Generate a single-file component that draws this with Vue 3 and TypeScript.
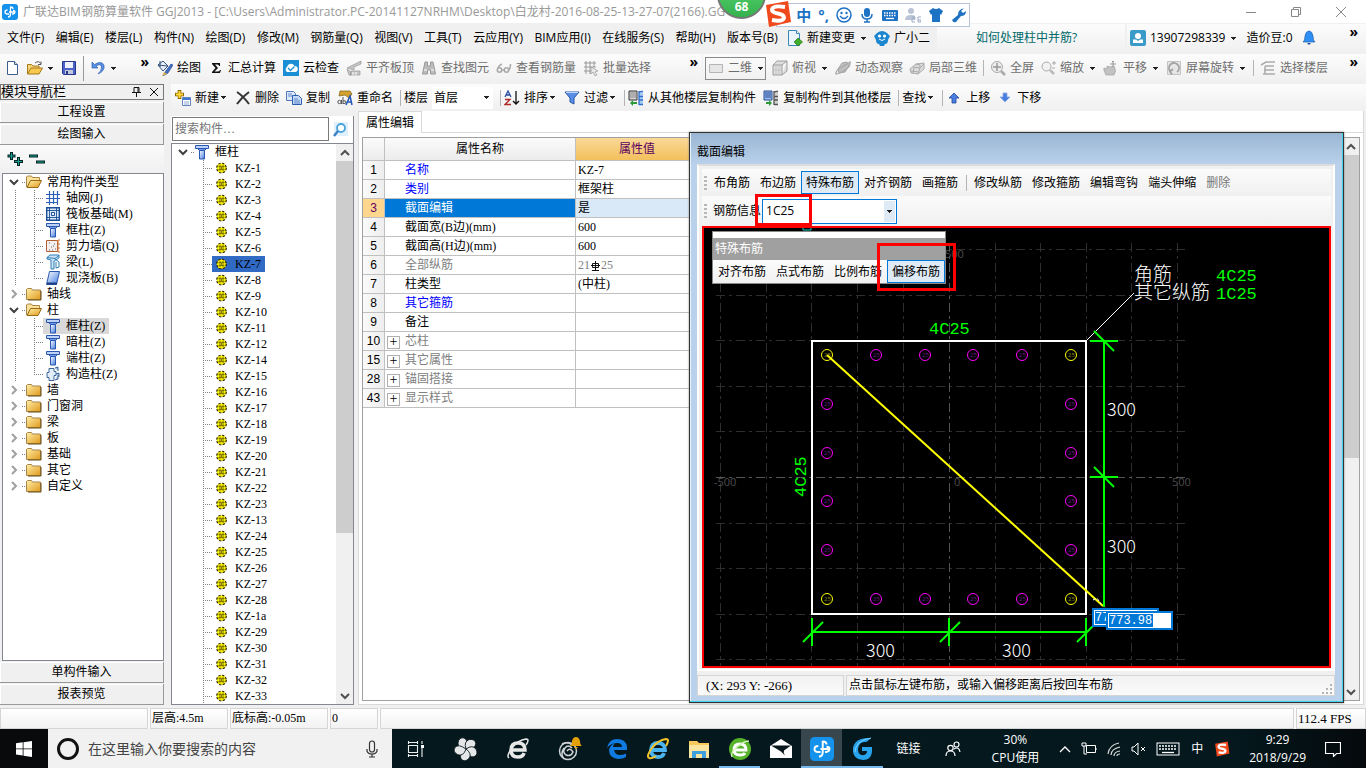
<script setup lang="ts">
import { ref } from 'vue'

interface Tool { icon?: string; text?: string; caret?: boolean; sep?: boolean; dim?: boolean; box?: boolean }
interface NavRow { level: number; text: string; icon: string; open?: boolean; last?: boolean; selected?: boolean }
interface Prop { no: number; name: string; value?: string; tone?: string; group?: boolean }

const menus = ['文件(F)', '编辑(E)', '楼层(L)', '构件(N)', '绘图(D)', '修改(M)', '钢筋量(Q)', '视图(V)', '工具(T)', '云应用(Y)', 'BIM应用(I)', '在线服务(S)', '帮助(H)', '版本号(B)']

const drawTools: Tool[] = [
  { icon: 'paint', text: '绘图' }, { icon: 'sigma', text: '汇总计算' }, { icon: 'cloud', text: '云检查' },
  { icon: 'align', text: '平齐板顶', dim: true }, { icon: 'binoculars', text: '查找图元', dim: true },
  { icon: 'glasses', text: '查看钢筋量', dim: true }, { icon: 'batch', text: '批量选择', dim: true },
]
const viewTools: Tool[] = [
  { icon: 'rect2d', text: '二维', caret: true, dim: true, box: true }, { icon: 'cube', text: '俯视', caret: true, dim: true },
  { icon: 'orbit', text: '动态观察', dim: true }, { icon: 'local3d', text: '局部三维', dim: true }, { sep: true },
  { icon: 'full', text: '全屏', dim: true }, { icon: 'zoom', text: '缩放', caret: true, dim: true },
  { icon: 'pan', text: '平移', caret: true, dim: true }, { icon: 'rotate', text: '屏幕旋转', caret: true, dim: true }, { sep: true },
  { icon: 'floors', text: '选择楼层', dim: true },
]
const editTools: Tool[] = [
  { icon: 'newcomp', text: '新建', caret: true }, { icon: 'delete', text: '删除' }, { icon: 'copy', text: '复制' }, { icon: 'rename', text: '重命名' }, { sep: true },
]
const listTools: Tool[] = [
  { sep: true }, { icon: 'sort', text: '排序', caret: true }, { icon: 'filter', text: '过滤', caret: true }, { sep: true },
  { icon: 'copyfrom', text: '从其他楼层复制构件' }, { icon: 'copyto', text: '复制构件到其他楼层' }, { sep: true },
  { text: '查找', caret: true }, { sep: true }, { icon: 'up', text: '上移' }, { icon: 'down', text: '下移' },
]

const navRows: NavRow[] = [
  { level: 0, text: '常用构件类型', icon: 'folderopen', open: true },
  { level: 1, text: '轴网(J)', icon: 'axis' },
  { level: 1, text: '筏板基础(M)', icon: 'raft' },
  { level: 1, text: '框柱(Z)', icon: 'column' },
  { level: 1, text: '剪力墙(Q)', icon: 'wall' },
  { level: 1, text: '梁(L)', icon: 'beam' },
  { level: 1, text: '现浇板(B)', icon: 'slab', last: true },
  { level: 0, text: '轴线', icon: 'folder' },
  { level: 0, text: '柱', icon: 'folderopen', open: true },
  { level: 1, text: '框柱(Z)', icon: 'column', selected: true },
  { level: 1, text: '暗柱(Z)', icon: 'column' },
  { level: 1, text: '端柱(Z)', icon: 'column' },
  { level: 1, text: '构造柱(Z)', icon: 'tiecol', last: true },
  ...['墙', '门窗洞', '梁', '板', '基础', '其它', '自定义'].map((text) => ({ level: 0, text, icon: 'folder' })),
]

const columns = '1 2 3 4 5 6 7 8 9 10 11 12 14 15 16 17 18 19 20 21 22 23 13 24 25 26 27 28 1a 29 30 31 32 33'.split(' ')
const selectedColumn = ref('7')

const props: Prop[] = [
  { no: 1, name: '名称', value: 'KZ-7', tone: 'blue' },
  { no: 2, name: '类别', value: '框架柱', tone: 'blue' },
  { no: 3, name: '截面编辑', value: '是' },
  { no: 4, name: '截面宽(B边)(mm)', value: '600' },
  { no: 5, name: '截面高(H边)(mm)', value: '600' },
  { no: 6, name: '全部纵筋', value: '21', tone: 'gray' },
  { no: 7, name: '柱类型', value: '(中柱)' },
  { no: 8, name: '其它箍筋', tone: 'blue' },
  { no: 9, name: '备注' },
  { no: 10, name: '芯柱', tone: 'gray', group: true },
  { no: 15, name: '其它属性', tone: 'gray', group: true },
  { no: 28, name: '锚固搭接', tone: 'gray', group: true },
  { no: 43, name: '显示样式', tone: 'gray', group: true },
]
const activeRow = ref(3)

const rebarModes = ['布角筋', '布边筋', '特殊布筋', '对齐钢筋', '画箍筋']
const rebarEdits = ['修改纵筋', '修改箍筋', '编辑弯钩', '端头伸缩']
const specialModes = ['对齐布筋', '点式布筋', '比例布筋', '偏移布筋']
const mode = ref('特殊布筋')
const special = ref('偏移布筋')
const search = ref('')
const offsetA = ref('773.98')
const offsetB = ref('773.98')

// Section drawing: origin at the column centre
const gridX = [-228, -182, -137, -91, -45, 46, 91, 137, 182, 228]
const gridY = [-227, -181, -136, -90, -45, 46, 91, 137, 182]
const steps = [-122, -73, -24, 24, 73, 122]
const bars = steps.flatMap((x) => steps.filter((y) => Math.abs(x) === 122 || Math.abs(y) === 122)
  .map((y) => ({ x, y, corner: Math.abs(x) === 122 && Math.abs(y) === 122 })))

const apps = ['edge', 'ie', 'explorer', 'greene', 'mail', 'glodon', 'gblue']
</script>

<template>
  <svg class="defs" aria-hidden="true">
    <defs>
      <linearGradient id="gBlue" x1="0" y1="0" x2="1" y2="1"><stop offset="0" stop-color="#fff" /><stop offset="1" stop-color="#3f7ae0" /></linearGradient>
      <linearGradient id="gGold" x1="0" y1="0" x2="1" y2="1"><stop offset="0" stop-color="#fff0a8" /><stop offset="1" stop-color="#e09a1c" /></linearGradient>
    </defs>
    <symbol id="logo" viewBox="0 0 16 16"><rect width="16" height="16" rx="3" fill="#1492ec" /><path d="M8.500 2.500V10q0 3-2.500 3M8.500 3Q11 3 11 5M5.500 6Q3 6 3 8t2.500 2H7M7 8h6M11 6.500q2 0 2 1.500t-2 2h-1" fill="none" stroke="#fff" stroke-width="1.300" /></symbol>
    <symbol id="newdoc" viewBox="0 0 16 16"><path d="M2.500 1.500h7l3 3v10h-10z" fill="#fff" stroke="#3a5f8c" /><path d="M9.500 1.500v3h3" fill="#cfe0f4" stroke="#3a5f8c" /></symbol>
    <symbol id="openfile" viewBox="0 0 16 16"><path d="M.5 14V4.500h4L6 6h6v2" fill="#f5d67a" stroke="#a87716" /><path d="M.5 14 4 8h11.500L12 14z" fill="#f8c94f" stroke="#a87716" /><path d="M8 3q4-3 5.500.5m.5-2v3h-3" fill="none" stroke="#555" /></symbol>
    <symbol id="save" viewBox="0 0 16 16"><path d="M1.500 1.500h13v13h-12l-1-1z" fill="#4b63c7" stroke="#29368c" /><path d="M4 2h8v6H4z" fill="#eef1fb" /><path d="M4 10h8v4H4z" fill="#c2c8dc" /><path d="M5 11h2v3H5z" fill="#29368c" /></symbol>
    <symbol id="undo" viewBox="0 0 16 16"><path d="M2 2v6h6L6 6q5-3 5.500 1 0 4-3.500 7 7-3 6-8.500Q12 0 4.500 4.500z" fill="#5a8fe0" stroke="#2c5fb8" stroke-width=".7" /></symbol>
    <symbol id="paint" viewBox="0 0 16 16"><path d="m1 5 5-4 5 5-5 5z" fill="#e8eef8" stroke="#35507a" /><path d="M3 1v6M1 5l9 1" stroke="#35507a" fill="none" /><path d="m8 12 6-8 2 1-5 8-5 3z" fill="#3f71c8" stroke="#24407c" stroke-width=".6" /><path d="m5 16 2-4 3 2z" fill="#e3b44a" /></symbol>
    <symbol id="sigma" viewBox="0 0 16 16"><path d="M4 3h8v3h-1q0-1.500-1.500-1.500H7L10 8l-3.500 3.500h3Q11.500 11.500 12 10h1l-1 3H4v-1l3.500-4L4 4z" fill="#111" /></symbol>
    <symbol id="cloud" viewBox="0 0 16 16"><rect width="16" height="16" fill="#1b8fd6" /><path d="M4 12a3 3 0 0 1 0-5 4 4 0 0 1 7.500-1A3 3 0 0 1 12 12z" fill="#fff" /><path d="m5 8 2.500 2.500 4-4" stroke="#1b8fd6" fill="none" stroke-width="1.300" /></symbol>
    <symbol id="align" viewBox="0 0 16 16"><path d="m1 8 6-3 8-4v3L8 7v3zM5 11h9v4H4zM1 9l4 3v3H3z" fill="#c4c4c4" stroke="#999" stroke-width=".7" /><path d="M7 12v3m3-3v3" stroke="#fff" /></symbol>
    <symbol id="binoculars" viewBox="0 0 16 16"><path d="M4 2h2.500v4h3V2H12l2.500 12h-5v-4h-3v4h-5z" fill="#bdbdbd" stroke="#999" /><path d="M3 10h3m4 0h3" stroke="#fff" /></symbol>
    <symbol id="glasses" viewBox="0 0 16 16"><g fill="none" stroke="#aaa" stroke-width="1.600"><circle cx="3.500" cy="10" r="2.200" /><circle cx="10.500" cy="10" r="2.200" /><path d="M6 10h2M2 8q1-3 4-4M12.500 10q2-1 2-6" /></g></symbol>
    <symbol id="batch" viewBox="0 0 16 16"><path d="M1 3h12M1 7h12M1 11h8M3 1v13M7 1v13M11 1v6" stroke="#999" fill="none" /><path d="m8 7 7 4-3 1 2 3-2 1-2-4-2 2z" fill="#e8e8e8" stroke="#999" stroke-width=".7" /></symbol>
    <symbol id="rect2d" viewBox="0 0 16 16"><path d="M1.500 4.500h13v8h-13z" fill="#e6e6e6" stroke="#b5b5b5" /></symbol>
    <symbol id="cube" viewBox="0 0 16 16"><path d="M1 5h9v10H1zM1 5l4-4h10l-5 4M15 1v10l-5 4" fill="#dedede" stroke="#9d9d9d" /><path d="M4 6v8m3-8v8M2 10h7" stroke="#c4c4c4" /></symbol>
    <symbol id="orbit" viewBox="0 0 16 16"><path d="m3 9 4-6 5-1 2 4-4 6-6 1z" fill="#bfbfbf" stroke="#a5a5a5" /><path d="M1 14Q0 11 7 7t8-5q1 4-5 8t-9 4z" fill="none" stroke="#aaa" stroke-width="1.300" /></symbol>
    <symbol id="local3d" viewBox="0 0 16 16"><path d="m1 9 6-5 8-1v6l-6 5-7-1z" fill="#ddd" stroke="#aaa" /><path d="m4 7 7 1 4-4M11 8l-2 6M7 4l4 1v3M5 8l-1 5M2 11l8 1" fill="none" stroke="#aaa" /></symbol>
    <symbol id="full" viewBox="0 0 16 16"><circle cx="7" cy="7" r="5.500" fill="#eee" stroke="#aaa" /><path d="M7 3v8M3 7h8" stroke="#999" stroke-width="1.500" /><path d="m11 11 4 4" stroke="#aaa" stroke-width="2.500" /></symbol>
    <symbol id="zoom" viewBox="0 0 16 16"><circle cx="6.500" cy="6.500" r="4.500" fill="#f2f2f2" stroke="#aaa" /><path d="m10 10 4 4" stroke="#bbb" stroke-width="2.500" /><path d="M12 3h4m-2-2v4M12 8h3" stroke="#aaa" /></symbol>
    <symbol id="pan" viewBox="0 0 16 16"><path d="M3 15q-3-6-2-7l3 1V6l3 1 4-1q3 5 0 9z" fill="#c2c2c2" stroke="#a0a0a0" stroke-width=".7" /><path d="M10 1v6M7 4h6M9 2l1-1 1 1" stroke="#999" fill="none" /></symbol>
    <symbol id="rotate" viewBox="0 0 16 16"><path d="M1.500 1.500h13v13h-13z" fill="#e6e6e6" stroke="#c4c4c4" /><path d="M4 11a5 5 0 1 1 7 1M7 9l-3 2.500 2 3" fill="none" stroke="#a0a0a0" stroke-width="1.800" /></symbol>
    <symbol id="floors" viewBox="0 0 16 16"><path d="m1 5 5-3 9 0M5 6h9M4 10h10M3 14h12M5 6v8" stroke="#aaa" stroke-width="1.500" fill="none" /></symbol>
    <symbol id="newcomp" viewBox="0 0 16 16"><path d="M4.500 0v9M0 4.500h9" stroke="#8b6a00" stroke-width="3.600" /><path d="M4.500 1v7M1 4.500h7" stroke="#ffd83c" stroke-width="2" /><path d="M7.500 7.500h8v8h-8z" fill="#fff" stroke="#5e83bd" /><path d="M8 8h7v2H8z" fill="#3f78d0" /><path d="M9 12h5m-5 2h5" stroke="#8aa9d6" /></symbol>
    <symbol id="delete" viewBox="0 0 16 16"><path d="M2 2q6 4 12 12M14 2Q7 7 2 14" stroke="#333" stroke-width="2" fill="none" /></symbol>
    <symbol id="copy" viewBox="0 0 16 16"><path d="M.5 1.500h7l2 2v7h-9z" fill="#dfeafb" stroke="#5078b8" /><path d="M6.500 5.500h6l3 3v6h-9z" fill="#c5daf8" stroke="#2e5fae" /><path d="M2 4h4M2 6h4m2 3h4m-4 2h6m-6 2h6" stroke="#3f6fbe" stroke-width=".8" /></symbol>
    <symbol id="rename" viewBox="0 0 16 16"><path d="M3 1h10l2 3-3 4-4-3-6 1z" fill="#d5a22e" stroke="#7d5b10" stroke-width=".7" /><g fill="none" stroke="#555"><circle cx="2.500" cy="12" r="1.700" /><path d="M4.500 10v4M6 7v7m0-3q3-1 3 1t-3 1.500" /></g><path d="m9 15 4-9 2 9m-5-3h4" stroke="#2457b8" stroke-width="1.500" fill="none" /></symbol>
    <symbol id="sort" viewBox="0 0 16 16"><path d="m1 7 3-6 3 6M2 5h4" stroke="#2a4ea0" fill="none" stroke-width="1.300" /><path d="M1 9.500h5l-5 5h6" stroke="#b02a2a" fill="none" stroke-width="1.300" /><path d="M12 1v13m-3-3 3 3 3-3" stroke="#111" fill="none" stroke-width="1.300" /></symbol>
    <symbol id="filter" viewBox="0 0 16 16"><path d="M1 2h14l-5 6v6l-4-2V8z" fill="#5a8ee6" stroke="#2857a8" /><path d="M2 2.500h12" stroke="#bcd4f8" /></symbol>
    <symbol id="copyfrom" viewBox="0 0 16 16"><path d="M1 1h8v9H1z" fill="#d4d4d4" stroke="#333" /><path d="M2 3h6M2 5h6M2 7h6" stroke="#888" /><path d="M11 1h4v14h-4z" fill="#a9ccf4" /><path d="M11 1v14M11 2.500q2-1.500 4-1M11 6.500h4M11 10h4M11 14.500h4" stroke="#2f6fc8" fill="none" stroke-width="1.300" /><path d="m2 13 3-3v2h4v2H5v2z" fill="#2d9a38" /></symbol>
    <symbol id="copyto" viewBox="0 0 16 16"><path d="M1 1h8v9H1z" fill="#9dbcf0" stroke="#234a94" /><path d="M2 3h6M2 5h6M2 7h6" stroke="#234a94" /><path d="M11 1h4v14h-4z" fill="#d0d0d0" /><path d="M11 1v14M11 2.500q2-1.500 4-1M11 6.500h4M11 10h4M11 14.500h4" stroke="#555" fill="none" stroke-width="1.300" /><path d="m9 13-3-3v2H3v2h3v2z" fill="#2d9a38" /></symbol>
    <symbol id="up" viewBox="0 0 16 16"><path d="m8 3 5 5h-3v5H6V8H3z" fill="#4a7fe0" stroke="#1f459c" stroke-width=".8" /></symbol>
    <symbol id="down" viewBox="0 0 16 16"><path d="m8 12 5-5h-3V3H6v4H3z" fill="#4a7fe0" stroke="#8aa9e6" stroke-width=".8" /></symbol>
    <symbol id="change" viewBox="0 0 16 16"><path d="M1.500.5h8l3 3v12h-11z" fill="#eaf5fd" stroke="#3a87b8" /><path d="M9.500.5v3h3" fill="#fff" stroke="#3a87b8" /><path d="m11 8 4.500 4-4.500 4-4-4z" fill="#3fae2a" stroke="#25760f" stroke-width=".7" /></symbol>
    <symbol id="robot" viewBox="0 0 16 16"><path d="M3 3q5-4 10 0l3 3-2 4q0 4-3 4l-1 2H6l-1-2q-3 0-3-4L0 6z" fill="#1c86cf" /><circle cx="5.500" cy="6" r="1.600" fill="#fff" /><circle cx="10.500" cy="6" r="1.600" fill="#fff" /><path d="M5 9q3 3 6 0" stroke="#fff" fill="none" /></symbol>
    <symbol id="user" viewBox="0 0 16 16"><rect width="16" height="16" rx="2" fill="#3a9bc8" /><circle cx="8" cy="6" r="3" fill="#fff" /><path d="M3 13V9.500h3l2 1.500 2-1.500h3V13z" fill="#fff" /></symbol>
    <symbol id="bell" viewBox="0 0 16 16"><path d="M2 12q2-1 2-6 1-5 4-5t4 5q0 5 2 6z" fill="#2f8ff5" stroke="#1d5fae" stroke-width=".7" /><path d="M6 13h4l-2 2z" fill="#1d4f9e" /></symbol>
    <symbol id="folder" viewBox="0 0 16 16"><path d="M.5 13.500v-10l1-1h4l1 1.500h8v9.500z" fill="url(#gGold)" stroke="#a8854a" /><path d="M15 5v9H2" fill="none" stroke="#6b4b12" /></symbol>
    <symbol id="folderopen" viewBox="0 0 16 16"><path d="M.5 13V3l1-1h4l1 1.500h7V7" fill="#fbe29a" stroke="#a8854a" /><path d="M1 13.500 4.500 6.500h11l-3.500 7z" fill="url(#gGold)" stroke="#9a6b16" /></symbol>
    <symbol id="axis" viewBox="0 0 14 16"><path d="M0 4.500h14M0 8.500h14M0 12.500h12M3.500 1v14M7.500 1v13M11.500 1v14" stroke="#2d5fb5" stroke-width="1.200" /></symbol>
    <symbol id="raft" viewBox="0 0 14 16"><path d="M.7 1.700h12.600v12.600H.7z" fill="#dceaf8" stroke="#184f96" stroke-width="1.400" /><path d="M3.500 1.500v13M10.500 1.500v13M.5 4.500h13M.5 11.500h13" stroke="#184f96" stroke-width=".9" /><path d="M5.500 6.500h3v3h-3z" fill="#fff" stroke="#184f96" /></symbol>
    <symbol id="column" viewBox="0 0 14 16"><path d="M.5 1.500h13v3h-13z" fill="#bcd2fa" stroke="#2a57b0" /><path d="M2.500 4.500h9l-2 2h-5z" fill="#6d9bee" stroke="#2a57b0" /><path d="M4.500 6.500h5v8.500h-5z" fill="url(#gBlue)" stroke="#2a57b0" /></symbol>
    <symbol id="wall" viewBox="0 0 14 16"><path d="M.5 2.500h11v11H.5z" fill="#f2efec" stroke="#b06030" /><path d="M12 2h2m-2 4h2m-2 4h2m-2 4h2M12 2v12" stroke="#d07030" /><path d="M3 5h1m4 1h1M5 9h1m3 2h1M3 12h1m3-4h1M6 12h1" stroke="#666" /></symbol>
    <symbol id="beam" viewBox="0 0 14 16"><path d="M1 3.500 4 1h9v3L8 7v8H5V6L1 5z" fill="#cfe3f8" stroke="#2e7fb8" /><path d="m1 3.500 8 1 4-3M9 5l4 3v5l-3 1V8" fill="none" stroke="#2e7fb8" /></symbol>
    <symbol id="slab" viewBox="0 0 14 16"><path d="M3.500 1.500h10l-3 13H.5z" fill="url(#gBlue)" stroke="#2a57b0" /><path d="M1 13.500h10" stroke="#1e3f84" stroke-width="2" /></symbol>
    <symbol id="tiecol" viewBox="0 0 14 16"><path d="M3 2.500h5v3h2v4H8v5H3v-3H1v-5h2z" fill="#e4eefa" stroke="#3c6698" /><path d="m9 2 3-1v4m-2 3 3-1v4m-4 3 3-1V9" stroke="#3c6698" fill="#9dbde4" /></symbol>
    <symbol id="gear" viewBox="0 0 11 12"><circle cx="5.500" cy="6" r="4.800" fill="#f5ec00" stroke="#2b2800" stroke-width="1.200" stroke-dasharray="2.300 1.470" /><path d="M4 3v6M7 3v6M2.500 4.500h6M2.500 7.500h6" stroke="#6b6500" stroke-width=".8" /><path d="M5 5.500h1v1H5z" fill="#111" /></symbol>
    <symbol id="search" viewBox="0 0 16 16"><rect x="2" width="14" height="14" fill="#e1f1fb" /><circle cx="9" cy="6" r="4" fill="#fff" stroke="#4aa3dc" stroke-width="1.800" /><path d="m6 9-4 5" stroke="#3b7fc4" stroke-width="2.400" /></symbol>
    <symbol id="sogou" viewBox="0 0 28 28"><path d="m2 5 22-4 3 21-22 5z" fill="#f04a1c" /><path d="M21 7Q9 5 8 9.500q0 3 6 4t6 4.500q-1 4-12 2" fill="none" stroke="#fff" stroke-width="4" /></symbol>
    <symbol id="smile" viewBox="0 0 16 16"><circle cx="8" cy="8" r="7" fill="none" stroke="#1d72c4" stroke-width="1.500" /><circle cx="5.500" cy="6" r="1.200" fill="#1d72c4" /><circle cx="10.500" cy="6" r="1.200" fill="#1d72c4" /><path d="M4 9q4 5 8 0" fill="none" stroke="#1d72c4" stroke-width="1.300" /></symbol>
    <symbol id="micblue" viewBox="0 0 16 16"><rect x="5" y="1" width="6" height="9" rx="3" fill="#1d72c4" /><path d="M3 7q0 5 5 5t5-5M8 12v3m-3 0h6" fill="none" stroke="#1d72c4" stroke-width="1.500" /></symbol>
    <symbol id="kbdblue" viewBox="0 0 16 16"><rect y="3" width="16" height="11" rx="1" fill="#1d72c4" /><path d="M2 6h12M2 8.500h12" stroke="#fff" stroke-width="1.400" stroke-dasharray="1.500 1" /><path d="M4 11.500h8" stroke="#fff" stroke-width="1.300" /></symbol>
    <symbol id="person" viewBox="0 0 16 16"><circle cx="6" cy="4" r="3" fill="#b9c4d6" /><path d="M0 13q0-5 6-5 3 0 4 1v4z" fill="#b9c4d6" /><path d="M7 10h3v2H7v3h3m6-5h-3v5h3v-2h-3" fill="none" stroke="#9facc4" /></symbol>
    <symbol id="shirt" viewBox="0 0 16 16"><path d="m1 4 4-3q3 2 6 0l4 3-2 4-1-1v8H4V7L3 8z" fill="#1d72c4" /></symbol>
    <symbol id="wrench" viewBox="0 0 16 16"><path d="M15 4q0 5-5 5l-5 6q-3 1-4-2l6-5q0-6 6-6.500L10 4l2 2z" fill="#1d72c4" /></symbol>
    <symbol id="win" viewBox="0 0 16 16"><path d="M0 2.300 6.700 1.300v6.200H0zM7.500 1.200 16 0v7.500H7.500zM0 8.300h6.700v6.200L0 13.600zM7.500 8.300H16V16l-8.500-1.200z" fill="#fff" /></symbol>
    <symbol id="mic" viewBox="0 0 16 18"><g fill="none" stroke="#333" stroke-width="1.200"><rect x="5.500" y="1" width="5" height="11" rx="2.500" /><path d="M3 9v2q1 3 5 3t5-3V9M8 14v3m-3 0h6" /></g></symbol>
    <symbol id="taskview" viewBox="0 0 18 16"><path d="M1 1.500h10M1 14.500h10M1.500 4.500h9v7h-9zM1.500 0v3M10.500 0v3M1.500 13v3M10.500 13v3M15 0v3M15 6v10" stroke="#eee" fill="none" stroke-width="1.100" /><path d="M14 4h3v3h-3z" fill="#fff" /></symbol>
    <symbol id="petal" viewBox="0 0 24 24"><path d="M12 12Q4 12 4 6 5 0 10 1q5 2 2 11z" fill="#e4e6e8" stroke="#0a181c" stroke-width=".8" /></symbol>
    <symbol id="pinwheel" viewBox="0 0 24 24"><use v-for="a in [0, 72, 144, 216, 288]" :key="a" href="#petal" width="24" height="24" :transform="`rotate(${a} 12 12)`" /></symbol>
    <symbol id="ewhite" viewBox="0 0 24 24"><path d="M5 13h14q0-7-7-7t-7 7q0 7 7 7 5 0 6-4" fill="none" stroke="#e8e8e8" stroke-width="3.500" /><path d="M3 21q-3-2 3-10T20 2q4 0 0 6" fill="none" stroke="#e8e8e8" stroke-width="1.500" /></symbol>
    <symbol id="swirl" viewBox="0 0 24 24"><g fill="none" stroke="#cfd3d6" stroke-width="1.500"><circle cx="10" cy="14" r="8.500" /><path d="M14 11q-4-4-7 0t1 7q5 2 7-3-3-5-6-1M4 7q6-3 10 1M6 22q-4-5 0-11" /></g><path d="M12 9q2-1 2-5 1-4 4-4t4 4q0 4 2 5zM16 10h4q-2 3-4 0z" fill="#e3a008" /></symbol>
    <symbol id="edge" viewBox="0 0 24 24"><path d="M2 11Q4 2 12 2q9 0 10 8v3H9q1 5 6 5 3 0 6-1.500V20q-3 2-8 2-9-1-9-9 1-5 6-7-2 2-2 4h9q0-4-5-4-6 0-10 5z" fill="#0f7be0" /></symbol>
    <symbol id="ie" viewBox="0 0 24 24"><path d="M5 13h14q0-7-7-7t-7 7q0 7 7 7 5 0 6-4" fill="none" stroke="#4bb4f0" stroke-width="3.800" /><path d="M3 21q-3-2 3-10T20 2q4 0 0 7M3 21q3 1 7-2" fill="none" stroke="#f3c52c" stroke-width="2" /></symbol>
    <symbol id="explorer" viewBox="0 0 24 24"><path d="M2 4h8l2 2h10v15H2z" fill="#f5c95c" /><path d="M2 8h20v13H2z" fill="#fbe3a0" /><path d="M5 21v-7h14v7h-4v-4H9v4z" fill="#3f9fdc" /></symbol>
    <symbol id="greene" viewBox="0 0 24 24"><circle cx="12" cy="12" r="11" fill="#57b32a" /><path d="M6 13h12q0-6-6-6t-6 6q0 5 6 5 4 0 5-2" fill="none" stroke="#fff" stroke-width="2.800" /><path d="M4 20Q2 16 9 10t12-6" fill="none" stroke="#d8f5c0" stroke-width="1.400" /></symbol>
    <symbol id="mail" viewBox="0 0 24 24"><path d="m1 9 11-7 11 7v12H1z" fill="#fff" /><path d="M2 8.500h20l-7 5q-1 3 1 5l-4-4z" fill="#07171b" /></symbol>
    <symbol id="gblue" viewBox="0 0 24 24"><path d="M20 1q-4 4-5 4Q8 4 7 12q0 7 6 6 3-1 3-4h-5v-4h10q1 13-9 13Q1 22 2 11 4 0 20 1z" fill="#28a3ee" /><path d="M20 1q-8 1-12 5t-4 9" stroke="#7fd0ff" fill="none" /></symbol>
    <symbol id="people" viewBox="0 0 16 16"><g fill="none" stroke="#fff" stroke-width="1.200"><circle cx="5.500" cy="7" r="2.700" /><circle cx="11.500" cy="3.500" r="2.500" /><path d="M1 15q0-5 4.500-5t4.500 5M9 8q5-3 6 3" /></g></symbol>
    <symbol id="battery" viewBox="0 0 16 16"><path d="M5.500 4.500h9v7h-9zM15 7v2M1 2v3h4V2M2 1v2m2-2v2M3 5v8h3" fill="none" stroke="#fff" /></symbol>
    <symbol id="wifi" viewBox="0 0 16 16"><path d="M2 13Q3 4 13 2M5 14q0-6 9-8M8 15q0-4 6-5M11 15q0-2 3-2" fill="none" stroke="#ddd" stroke-width="1.200" /></symbol>
    <symbol id="mute" viewBox="0 0 16 16"><path d="M1 6h2l4-4v12L3 10H1zM10 6l4 4m0-4-4 4" fill="none" stroke="#fff" /></symbol>
    <symbol id="keyboard" viewBox="0 0 24 16"><rect x="1" y="2" width="22" height="12" fill="none" stroke="#fff" /><path d="M3 5h18M3 8h18" stroke="#fff" stroke-dasharray="2 1" stroke-width="1.300" /><path d="M6 11.500h12" stroke="#fff" stroke-width="1.300" /></symbol>
    <symbol id="notice" viewBox="0 0 16 16"><path d="M.5 1.500h15v11h-4l-3 3v-3h-8z" fill="none" stroke="#fff" stroke-width="1.200" /></symbol>
    <symbol id="rebar" viewBox="0 0 9 10"><path d="M4.500 0v10M1 9.500h7" stroke="#111" /><path d="M1.500 2.500h6v4h-6z" fill="none" stroke="#111" /><path d="M0 4.500h9" stroke="#111" /></symbol>
  </svg>

  <div class="app">
    <header class="title">
      <svg class="i16"><use href="#logo" /></svg>
      <h1>广联达BIM钢筋算量软件 GGJ2013 - [C:\Users\Administrator.PC-20141127NRHM\Desktop\白龙村-2016-08-25-13-27-07(2166).GG</h1>
      <div class="winbtns">
        <button aria-label="最小化"><svg viewBox="0 0 12 12"><path d="M1 6.500h10" /></svg></button>
        <button aria-label="还原"><svg viewBox="0 0 12 12"><path d="M1.500 3.500h7v7h-7zM3.500 3.500v-2h7v7h-2" /></svg></button>
        <button aria-label="关闭"><svg viewBox="0 0 12 12"><path d="m1 1 10 10M11 1 1 11" /></svg></button>
      </div>
      <div class="ball">68</div>
      <div class="ime">
        <svg class="sogou"><use href="#sogou" /></svg>
        <b>中</b><b>°,</b>
        <svg v-for="n in ['smile', 'micblue', 'kbdblue', 'person', 'shirt', 'wrench']" :key="n" class="i16"><use :href="'#' + n" /></svg>
      </div>
    </header>

    <div class="row">
      <nav class="strip menus">
        <button v-for="m in menus" :key="m">{{ m }}</button>
      </nav>
      <div class="strip extras">
        <button class="tool"><svg class="i16"><use href="#change" /></svg>新建变更<i class="caret"></i></button>
        <button class="tool"><svg class="i16"><use href="#robot" /></svg>广小二</button>
      </div>
      <div class="strip tip"><a href="#">如何处理柱中并筋?</a></div>
      <div class="strip account">
        <button class="tool"><svg class="i16"><use href="#user" /></svg>13907298339<i class="caret"></i></button>
        <span>造价豆:0</span>
        <svg class="i16"><use href="#bell" /></svg>
        <button class="more">»</button>
      </div>
    </div>

    <div class="row">
      <div class="strip files">
        <button aria-label="新建文件"><svg class="i16"><use href="#newdoc" /></svg></button>
        <button class="tool" aria-label="打开"><svg class="i16"><use href="#openfile" /></svg><i class="caret"></i></button>
        <button aria-label="保存"><svg class="i16"><use href="#save" /></svg></button>
        <i class="sep dark"></i>
        <button class="tool" aria-label="撤销"><svg class="i16"><use href="#undo" /></svg><i class="caret"></i></button>
        <button class="more">»</button>
      </div>
      <div class="strip draw">
        <button v-for="t in drawTools" :key="t.text" class="tool" :class="{ dim: t.dim }"><svg class="i16"><use :href="'#' + t.icon" /></svg>{{ t.text }}</button>
        <button class="more">»</button>
      </div>
      <div class="strip views">
        <template v-for="(t, k) in viewTools" :key="k">
          <i v-if="t.sep" class="sep"></i>
          <button v-else class="tool dim" :class="{ box: t.box }"><svg class="i16"><use :href="'#' + t.icon" /></svg>{{ t.text }}<i v-if="t.caret" class="caret"></i></button>
        </template>
        <button class="more">»</button>
      </div>
    </div>

    <main class="body">
      <aside class="nav">
        <div class="navhead"><span>模块导航栏</span>
          <button aria-label="固定"><svg viewBox="0 0 12 12"><path d="M4 1.500h5v5H4zM2 6.500h9M6.500 7v4M8 2v4" /></svg></button>
          <button aria-label="关闭"><svg viewBox="0 0 12 12"><path d="m2 2 8 8m0-8-8 8" /></svg></button>
        </div>
        <button class="bar">工程设置</button>
        <button class="bar">绘图输入</button>
        <div class="expand">
          <button aria-label="全部展开"><svg viewBox="0 0 16 16"><path d="M4.500 1v8M.5 5h8M11.500 6v9M7 10.500h9" stroke="#022" stroke-width="3" /><path d="M4.500 2v6M1.500 5h6M11.500 7v7M8 10.500h7" stroke="#1aa090" /></svg></button>
          <button aria-label="全部折叠"><svg viewBox="0 0 16 16"><path d="M0 5h9M7 11h9" stroke="#022" stroke-width="3" /><path d="M1 5h7M8 11h7" stroke="#1aa090" /></svg></button>
        </div>
        <ul class="navtree">
          <li v-for="(r, k) in navRows" :key="k">
            <template v-if="r.level === 0">
              <svg class="chev" :class="{ open: r.open }" viewBox="0 0 12 12"><path :d="r.open ? 'M2 4l4 4 4-4' : 'M4 2l4 4-4 4'" /></svg>
              <i class="hdots"></i><svg class="i16"><use :href="'#' + r.icon" /></svg><span class="t0">{{ r.text }}</span>
            </template>
            <template v-else>
              <i class="ga"></i><i class="gb" :class="{ last: r.last }"></i>
              <span class="leaf" :class="{ selected: r.selected }"><svg class="i14"><use :href="'#' + r.icon" /></svg>{{ r.text }}</span>
            </template>
          </li>
        </ul>
        <button class="bar">单构件输入</button>
        <button class="bar">报表预览</button>
      </aside>

      <section class="right">
        <div class="strip edit">
          <template v-for="(t, k) in editTools" :key="k">
            <i v-if="t.sep" class="sep"></i>
            <button v-else class="tool"><svg class="i16"><use :href="'#' + t.icon" /></svg>{{ t.text }}<i v-if="t.caret" class="caret"></i></button>
          </template>
          <label class="floor">楼层 <select><option>首层</option></select><i class="caret"></i></label>
          <template v-for="(t, k) in listTools" :key="'l' + k">
            <i v-if="t.sep" class="sep"></i>
            <button v-else class="tool"><svg v-if="t.icon" class="i16"><use :href="'#' + t.icon" /></svg>{{ t.text }}<i v-if="t.caret" class="caret"></i></button>
          </template>
        </div>
        <div class="panes">
          <div class="list">
            <div class="find"><input v-model="search" aria-label="搜索构件" placeholder="搜索构件…"><button aria-label="搜索"><svg class="i16"><use href="#search" /></svg></button></div>
            <div class="listbox">
              <ul>
                <li class="root"><svg class="chev open" viewBox="0 0 12 12"><path d="M2 4l4 4 4-4" /></svg><i class="hdots"></i><svg class="i14"><use href="#column" /></svg><span class="t0">框柱</span></li>
                <li v-for="c in columns" :key="c"><i class="gb"></i><span class="kz" :class="{ on: c === selectedColumn }" @click="selectedColumn = c"><svg><use href="#gear" /></svg>KZ-{{ c }}</span></li>
              </ul>
              <div class="scroll"><svg viewBox="0 0 12 12"><path d="m2 8 4-4 4 4" /></svg><i class="thumb"></i><svg viewBox="0 0 12 12"><path d="m2 4 4 4 4-4" /></svg></div>
            </div>
          </div>

          <div class="props">
            <div class="tabs"><button class="tab">属性编辑</button><i></i></div>
            <div class="propbox">
              <table>
                <colgroup><col class="cno"><col class="cname"><col></colgroup>
                <thead><tr><th></th><th>属性名称</th><th class="val"><span>属性值</span></th></tr></thead>
                <tbody>
                  <tr v-for="p in props" :key="p.no" :class="{ active: p.no === activeRow }" @click="activeRow = p.no">
                    <th>{{ p.no }}</th>
                    <td :class="p.tone"><i class="plus" :class="{ none: !p.group }">+</i>{{ p.name }}</td>
                    <td :class="{ gray: p.no === 6 }">{{ p.value }}<template v-if="p.no === 6"> <svg class="rebar"><use href="#rebar" /></svg>25</template></td>
                  </tr>
                </tbody>
              </table>
              <div class="scroll"><svg viewBox="0 0 12 12"><path d="m2 8 4-4 4 4" /></svg><i class="thumb"></i><svg viewBox="0 0 12 12"><path d="m2 4 4 4 4-4" /></svg></div>
            </div>

            <div class="dialog" role="dialog" aria-labelledby="dlg">
              <h2 id="dlg">截面编辑</h2>
              <div class="dbody">
                <div class="dtools">
                  <i class="grip"></i>
                  <button v-for="m in rebarModes" :key="m" :class="{ on: m === mode }" @click="mode = m">{{ m }}</button>
                  <i class="sep"></i>
                  <button v-for="m in rebarEdits" :key="m">{{ m }}</button>
                  <button disabled>删除</button>
                </div>
                <div class="dtools second">
                  <i class="grip"></i><label for="info">钢筋信息</label>
                  <span class="combo"><select id="info"><option>1C25</option></select><i class="drop"><i class="caret"></i></i></span>
                </div>
                <div class="canvas">
                  <svg class="drawing">
                    <path d="M99 0v2h8V0" stroke="#19d0d0" fill="none" />
                    <g transform="translate(245 249)">
                      <g class="grid">
                        <path v-for="x in gridX" :key="'x' + x" :d="`M${x}.5-234v423`" />
                        <path v-for="y in gridY" :key="'y' + y" :d="`M-233 ${y}.5h469`" />
                        <path class="axis" d="M.5-234v423M-233 .5h469" />
                      </g>
                      <g class="gl"><text x="-235" y="9">-500</text><text x="5" y="9">0</text><text x="223" y="9">500</text><text x="-4" y="-219">500</text></g>
                      <rect x="-137" y="-136" width="274" height="273" fill="none" stroke="#fff" stroke-width="2" />
                      <path d="M137-136 185-184" stroke="#fff" />
                      <g v-for="b in bars" :key="b.x + ',' + b.y" :class="b.corner ? 'corner' : 'mid'">
                        <circle :cx="b.x" :cy="b.y" r="5.500" /><text :x="b.x - 3" :y="b.y + 2">25</text>
                      </g>
                      <path d="M-122-122 154 129" stroke="#ff0" stroke-width="2" />
                      <path d="m144 123 4-2 4 6" fill="none" stroke="#fff" stroke-dasharray="3 2" />
                      <path class="measure" d="M155-136v266M141-136h28M145-146l20 20M141 0h28M145-10l20 20M-137 155h274M-137 141v28M0 141v28M137 141v28M-146 165l20-20M-9 165l20-20M128 165l20-20" />
                      <g class="white"><text x="158" y="-61">300</text><text x="158" y="76">300</text><text x="-83" y="180">300</text><text x="53" y="180">300</text></g>
                      <g class="cjk"><text x="185" y="-196">角筋</text><text x="185" y="-178">其它纵筋</text></g>
                      <g class="green"><text x="267" y="-196">4C25</text><text x="267" y="-178">1C25</text><text x="-20" y="-143">4C25</text><text transform="translate(-143 20) rotate(-90)">4C25</text></g>
                    </g>
                  </svg>
                  <div class="palette">
                    <div class="ptitle">特殊布筋</div>
                    <div class="pbtns"><button v-for="s in specialModes" :key="s" :class="{ on: s === special }" @click="special = s">{{ s }}</button></div>
                  </div>
                  <input v-model="offsetA" class="off a" aria-label="偏移X"><input v-model="offsetB" class="off b" aria-label="偏移Y">
                  <i class="mark m1"></i><i class="mark m2"></i>
                </div>
              </div>
              <div class="dstatus"><span class="xy">(X: 293 Y: -266)</span><span>点击鼠标左键布筋，或输入偏移距离后按回车布筋</span><svg class="resize" viewBox="0 0 12 12"><path d="M8 1h2v2H8zM8 5h2v2H8zM4 5h2v2H4zM8 9h2v2H8zM4 9h2v2H4zM0 9h2v2H0z" fill="#b4b4b4" /></svg></div>
            </div>
          </div>
        </div>
      </section>
    </main>

    <footer class="status"><span></span><span>层高:4.5m</span><span>底标高:-0.05m</span><span>0</span><span></span><span>112.4 FPS</span></footer>

    <div class="taskbar">
      <button class="start" aria-label="开始"><svg class="i16"><use href="#win" /></svg></button>
      <div class="cortana"><i class="ring"></i><input aria-label="搜索" placeholder="在这里输入你要搜索的内容"><svg class="mic"><use href="#mic" /></svg></div>
      <button class="tv" aria-label="任务视图"><svg><use href="#taskview" /></svg></button>
      <button v-for="a in ['pinwheel', 'ewhite', 'swirl']" :key="a" class="wide" :aria-label="a"><svg class="i24"><use :href="'#' + a" /></svg></button>
      <button v-for="a in apps" :key="a" class="appbtn" :class="a" :aria-label="a"><svg class="i24"><use :href="a === 'glodon' ? '#logo' : '#' + a" /></svg></button>
      <div class="tray">
        <span class="link">链接</span>
        <svg class="i16"><use href="#people" /></svg>
        <span class="two cpu">30%<br>CPU使用</span>
        <svg class="i14" viewBox="0 0 14 16"><path d="m2 11 5-5 5 5" fill="none" stroke="#fff" stroke-width="1.300" /></svg>
        <svg class="i16"><use href="#battery" /></svg><svg class="i16"><use href="#wifi" /></svg><svg class="i16"><use href="#mute" /></svg>
        <svg class="kb"><use href="#keyboard" /></svg><span class="lang">中</span><svg class="i16"><use href="#sogou" /></svg>
        <span class="two clock">9:29<br>2018/9/29</span>
        <button aria-label="通知"><svg class="i16"><use href="#notice" /></svg></button>
      </div>
    </div>
  </div>
</template>

<style>
body { margin: 0; background: #f0f0f0; }
</style>

<style scoped>
.defs { position: absolute; width: 0; height: 0; }
.app { min-height: 100vh; display: flex; flex-direction: column; background: #f0f0f0; color: #000; font: 12px/16px "Open Sans", "Noto Sans CJK SC", sans-serif; overflow: hidden; }
.app * { box-sizing: border-box; }
button, input, select { font: inherit; color: inherit; margin: 0; padding: 0; border: 0; background: none; border-radius: 0; }
button { white-space: nowrap; }
svg { flex: none; display: block; }
ul { list-style: none; margin: 0; padding: 0; }
.i16 { width: 16px; height: 16px; }
.i14 { width: 14px; height: 16px; }
.i24 { width: 24px; height: 24px; }

.title { height: 23px; background: #fff; display: flex; align-items: center; gap: 5px; padding-left: 2px; position: relative; }
.title h1 { flex: 1; margin: 0; font: inherit; color: #999; white-space: nowrap; overflow: hidden; min-width: 0; }
.winbtns { display: flex; align-items: center; gap: 33px; padding-right: 19px; }
.winbtns svg { width: 12px; height: 12px; fill: none; stroke: #888; }
.ball { position: absolute; left: 717px; top: -30px; width: 49px; height: 49px; border-radius: 50%; background: linear-gradient(#5fd97a, #35b24c); border: 2px solid #777; color: #fff; font-weight: bold; line-height: 16px; padding-top: 27px; text-align: center; z-index: 2; }
.ime { position: absolute; left: 776px; top: 3px; height: 24px; width: 194px; background: #fff; border: 1px solid #b7c6da; display: flex; align-items: center; justify-content: flex-end; gap: 7px; padding-right: 2px; z-index: 2; color: #1d72c4; font-size: 15px; }
.ime .sogou { position: absolute; left: -13px; top: -4px; width: 28px; height: 28px; }

.row { display: flex; height: 30px; }
.strip { display: flex; align-items: center; gap: 7px; background: linear-gradient(#fcfcfc, #f0f0f0); height: 28px; margin: 1px 0; white-space: nowrap; }
.menus { background: #f0f0f0; width: 778px; justify-content: space-between; padding-left: 7px; gap: 0; }
.extras { background: #f0f0f0; padding-left: 9px; width: 159px; gap: 6px; }
.tip { flex: 1; padding-left: 39px; }
.tip a { color: #00696b; text-decoration: none; }
.account { margin-left: 2px; width: 239px; padding-left: 3px; gap: 8px; }
.tool { display: flex; align-items: center; gap: 4px; }
.dim { color: #6e6e6e; }
.caret { width: 9px; height: 3px; flex: none; background: linear-gradient(#222, #222) 2px 0 / 5px 1px no-repeat, linear-gradient(#222, #222) 3px 1px / 3px 1px no-repeat, linear-gradient(#222, #222) 4px 2px / 1px 1px no-repeat; }
.more { margin-left: auto; font-weight: bold; font-size: 14px; align-self: flex-start; padding-right: 8px; }
.sep { width: 1px; height: 16px; background: #b4b4b4; flex: none; }
.sep.dark { height: 25px; background: #999; }
.files { width: 153px; padding-left: 5px; gap: 6px; }
.files .tool { gap: 3px; }
.files .more, .draw .more { padding-right: 4px; }
.draw { width: 549px; padding-left: 4px; }
.views { flex: 1; margin-left: 1px; padding-left: 2px; gap: 6px; }
.box { border: 1px solid #8a8a8a; height: 23px; padding: 0 3px 0 2px; width: 61px; }

.body { flex: 1; display: flex; min-height: 0; }
.nav { width: 165px; display: flex; flex-direction: column; padding-right: 1px; padding-bottom: 3px; }
.nav, .status, .list, .dstatus, .navtree, .propbox { font-family: "Liberation Serif", "Noto Sans CJK SC", serif; }
.navhead { height: 16px; border: 1px solid #777; display: flex; align-items: center; font-size: 13px; margin: 1px 0; }
.navhead span { flex: 1; }
.navhead button { padding: 0 3px; }
.navhead svg { width: 12px; height: 12px; fill: none; stroke: #111; }
.bar { height: 21px; flex: none; border: 1px solid #999; border-width: 0 1px 1px 0; box-shadow: inset 1px 1px #fff; margin-top: 1px; }
.expand { height: 28px; display: flex; align-items: center; gap: 6px; padding-left: 7px; background: linear-gradient(#fafafa, #f0f0f0); }
.expand svg { width: 16px; height: 16px; fill: none; }
.navtree { flex: 1; border: 1px solid #828790; margin-left: 2px; background: #fff; }
li { height: 16px; display: flex; align-items: center; white-space: nowrap; }
.navtree li { padding-left: 5px; }
.chev { width: 12px; height: 12px; fill: none; stroke: #a0a0a0; stroke-width: 2; }
.chev.open { stroke: #404040; }
.hdots { width: 6px; height: 1px; background: repeating-linear-gradient(to right, #808080 0 1px, transparent 1px 2px) 2px 0 no-repeat; }
.t0 { padding-left: 5px; }
.ga { width: 20px; height: 16px; background: repeating-linear-gradient(#808080 0 1px, transparent 1px 2px) 7px 0 / 1px 100% no-repeat; }
.gb { width: 15px; height: 16px; background: repeating-linear-gradient(#808080 0 1px, transparent 1px 2px) 6px 0 / 1px 100% no-repeat, repeating-linear-gradient(to right, #808080 0 1px, transparent 1px 2px) 6px 8px / 100% 1px no-repeat; }
.gb.last { background-size: 1px 8px, 100% 1px; }
.leaf { display: flex; gap: 6px; padding: 0 4px 0 3px; }
.leaf.selected { background: #d9d9d9; }

.right { flex: 1; display: flex; flex-direction: column; min-width: 0; }
.edit { height: 27px; margin: 1px 0 0 6px; padding-left: 4px; }
.edit .tool .caret { margin-left: -4px; }
.edit .sep { margin-right: -4px; }
.floor { display: flex; align-items: center; background: linear-gradient(#fff, #fff) right / 61px 100% no-repeat; height: 22px; gap: 4px; padding-right: 2px; }
.floor select { appearance: none; width: 46px; padding-left: 2px; }
.panes { flex: 1; display: flex; padding: 0 2px 3px 6px; gap: 4px; }
.list { width: 183px; display: flex; flex-direction: column; padding-top: 5px; }
.find { display: flex; background: #fff; padding: 1px 0 1px 1px; height: 27px; border-right: 1px solid #828790; }
.find input { width: 157px; height: 24px; border: 1px solid #7a7a7a; padding-left: 2px; }
.find input::placeholder { color: #757575; }
.find button { flex: 1; padding-left: 3px; }
.listbox { flex: 1; background: #fff; border: 1px solid #828790; display: flex; }
.listbox ul { flex: 1; }
.listbox .root { padding-left: 5px; }
.listbox .root .t0 { padding-left: 6px; }
.listbox li { padding-left: 25px; }
.kz { display: flex; align-items: center; gap: 8px; padding: 0 4px; line-height: 16px; }
.kz svg { width: 11px; height: 12px; }
.kz.on { background: #316ac5; }
.scroll { width: 17px; background: #f0f0f0; display: flex; flex-direction: column; align-items: center; }
.scroll svg { width: 12px; height: 12px; margin: 3px 0 2px; fill: none; stroke: #505050; stroke-width: 2; }
.scroll .thumb { width: 100%; background: #cdcdcd; height: 372px; margin-bottom: auto; }

.props { flex: 1; position: relative; display: flex; flex-direction: column; min-width: 0; background: #fff; border: 1px solid #d9d9d9; border-top: 0; }
.tabs { display: flex; height: 22px; background: #f0f0f0; }
.tab { background: #fff; border: 1px solid #d9d9d9; border-width: 1px 1px 0 0; width: 63px; }
.tabs i { flex: 1; background: #fff; border-bottom: 1px solid #d9d9d9; }
.propbox { flex: 1; margin: 4px 3px 3px; display: flex; align-items: stretch; border: 1px solid #a0a0a0; }
.propbox .thumb { height: 303px; }
table { flex: 1; border-collapse: separate; border-spacing: 0; table-layout: fixed; align-self: flex-start; }
.cno { width: 22px; }
.cname { width: 191px; }
th, td { height: 19px; padding: 0; border: solid #c0c0c0; border-width: 0 1px 1px 0; font-weight: normal; line-height: 18px; text-align: left; white-space: nowrap; }
thead th { height: 23px; background: linear-gradient(#fbfbfb, #ececec); text-align: center; }
thead .val { background: linear-gradient(#fad898, #f3c05c); color: #5b0060; text-align: left; padding-left: 43px; }
tbody th { text-align: center; font-family: "Liberation Sans", sans-serif; background: linear-gradient(to right, #fafafa, #eee); }
td:last-child { padding-left: 2px; }
.blue { color: #00f; }
.gray { color: #808080; }
.active th { background: #ffd68e; color: #5b0060; }
.active td { background: #0078d7; color: #fff; }
.active td:last-child { background: #d9e9f8; color: #000; }
.plus { display: inline-block; width: 13px; height: 13px; line-height: 10px; border: 1px solid #b0b0b0; color: #000; font-style: normal; font-size: 14px; text-align: center; margin: 0 5px 0 2px; vertical-align: middle; }
.plus.none { visibility: hidden; }
.rebar { width: 9px; height: 10px; display: inline-block; vertical-align: middle; margin: 0 1px; }

.dialog { position: absolute; left: 330px; right: 19px; top: 21px; bottom: 1px; z-index: 1; background: #b9d1ea; border: 1px solid #333; box-shadow: inset -1px -1px #3fd0ee, inset 1px 0 #e8f2fb, 0 0 2px #888; padding: 0 8px 6px 7px; display: flex; flex-direction: column; }
.dialog h2 { margin: 0 -7px 0 -6px; height: 31px; font: inherit; line-height: 38px; padding-left: 6px; background: linear-gradient(#9ab5d3, #b9d1ea); }
.dbody { flex: 1; display: flex; flex-direction: column; background: #f0f0f0; border: 2px solid #fff; border-top-color: #ddd; padding: 3px 2px 1px 3px; min-height: 0; }
.dtools { display: flex; align-items: center; height: 27px; background: linear-gradient(#fbfbfb, #f0f0f0); white-space: nowrap; flex: none; }
.dtools button, .pbtns button { padding: 0 4px; border: 1px solid transparent; height: 23px; flex: none; }
.dtools .on, .pbtns .on { background: #deebf6; border-color: #0078d7; }
.dtools .sep { margin: 0 2px 0 3px; }
.dtools button:disabled { color: #777; }
.grip { width: 3px; height: 14px; margin: 0 2px; background: repeating-linear-gradient(#b8b8b8 0 2px, transparent 2px 4px); }
.second { height: 30px; }
.second label { padding: 0 1px 0 4px; }
.combo { display: flex; width: 135px; height: 25px; border: 1px solid #0078d7; background: #fff; }
.combo select { appearance: none; flex: 1; padding-left: 3px; }
.drop { width: 11px; margin: 1px; background: #deebf6; display: flex; align-items: center; justify-content: center; }
.canvas { flex: 1; background: #000; border: 2px solid #f00; position: relative; min-height: 430px; display: flex; }
.drawing { flex: 1; width: 100%; min-height: 430px; }
.grid path { stroke: #2e2e2e; stroke-dasharray: 9 4 3 4; }
.grid .axis { stroke: #555; }
.gl { fill: #4c4c4c; font-size: 11px; }
.corner circle { fill: none; stroke: #ff0; }
.mid circle { fill: none; stroke: #f0f; }
.corner text { fill: #8a8a00; font-size: 6px; }
.mid text { fill: #6a1a8a; font-size: 6px; }
.measure { fill: none; stroke: #0f0; stroke-width: 2; }
.white { fill: #fff; font: 18px "Noto Sans CJK SC", sans-serif; font-weight: 300; }
.cjk { fill: #fff; font: 19px "Noto Sans CJK SC", sans-serif; font-weight: 300; }
.green { fill: #0f0; font: 17px "Liberation Mono", monospace; }
.palette { position: absolute; left: 8px; top: 3px; background: #fff; border: 1px solid #888; padding-top: 6px; }
.ptitle { background: #a0a0a0; color: #fff; height: 22px; line-height: 21px; padding-left: 2px; }
.pbtns { display: flex; background: linear-gradient(#fcfcfc, #f0f0f0); }
.off { position: absolute; width: 67px; height: 19px; border: 2px solid #0078d7; padding-left: 1px; color: #fff; font: 12px "Liberation Mono", monospace; background: linear-gradient(#0078d7, #0078d7) 1px 1px / 44px 13px no-repeat #fff; }
.a { left: 388px; top: 380px; }
.b { left: 402px; top: 383px; }
.mark { position: absolute; border: 3px solid #f00; }
.m1 { left: 51px; top: -34px; width: 57px; height: 32px; }
.m2 { left: 173px; top: 15px; width: 79px; height: 48px; }
.dstatus { height: 21px; display: flex; gap: 2px; margin-top: 4px; box-shadow: 0 -4px #f0f0f0; background: #f0f0f0; position: relative; }
.dstatus span { border: 1px solid #d5d5d5; padding-left: 2px; flex: 1; line-height: 19px; background: linear-gradient(#f2f2f2, #fafafa); }
.dstatus .xy { flex: none; width: 147px; padding-left: 8px; font-size: 13px; }
.resize { position: absolute; right: 1px; bottom: 1px; width: 12px; height: 12px; }

.status { display: flex; gap: 2px; height: 21px; background: #fafafa; }
.status span { border: 1px solid #d5d5d5; line-height: 19px; padding-left: 1px; width: 78px; background: linear-gradient(#fff, #f2f2f2); white-space: nowrap; }
.status span:nth-child(1) { width: 148px; }
.status span:nth-child(3) { width: 98px; }
.status span:nth-child(4) { width: 48px; }
.status span:nth-child(5) { flex: 1; }
.status span:nth-child(6) { width: 70px; font-size: 13px; }

.taskbar { height: 40px; background: linear-gradient(to right, #0a0e10, #04181e 30%, #04181e 90%, #05090b); display: flex; color: #fff; }
.taskbar button { display: flex; align-items: center; justify-content: center; flex: none; }
.start { width: 48px; background: #080a0b; }
.cortana { width: 344px; background: #f1f1f1; display: flex; align-items: center; padding: 0 12px 0 9px; gap: 9px; }
.ring { width: 22px; height: 22px; border: 3px solid #111; border-radius: 50%; }
.cortana input { flex: 1; min-width: 0; font-size: 14px; color: #333; }
.cortana input::placeholder { color: #444; }
.mic { width: 16px; height: 18px; }
.tv { width: 48px; }
.tv svg { width: 18px; height: 16px; }
.wide { width: 52px; }
.appbtn { width: 41px; border-bottom: 3px solid transparent; padding-top: 3px; }
.glodon { background: #37474d; }
.greene, .glodon, .gblue { border-bottom-color: #76b9ed; }
.tray { flex: 1; display: flex; align-items: center; justify-content: flex-end; gap: 9px; padding: 0 25px 0 12px; white-space: nowrap; }
.two { text-align: center; line-height: 18px; }
.kb { width: 24px; height: 16px; }
.lang { padding: 0 2px; }
.clock { padding: 0 10px; }
.cpu { padding: 0 10px 0 22px; }
.link { padding-right: 15px; }
</style>
